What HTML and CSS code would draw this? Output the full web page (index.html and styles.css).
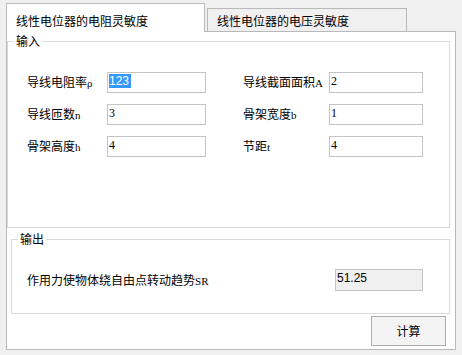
FILE: index.html
```html
<!DOCTYPE html>
<html lang="zh-CN">
<head>
<meta charset="utf-8">
<title>线性电位器</title>
<link rel="stylesheet" href="styles.css">
</head>
<body>
<div class="window">
  <div class="tabs">
    <div class="tab tab-active">线性电位器的电阻灵敏度</div>
    <div class="tab tab-inactive">线性电位器的电压灵敏度</div>
  </div>
  <div class="panel">
    <div class="group group-input">
      <span class="legend">输入</span>
      <div class="form-grid">
        <div class="label">导线电阻率<span class="lat">ρ</span></div>
        <div class="textbox sans"><span class="sel">123</span></div>
        <div class="label label-right">导线截面面积<span class="lat">A</span></div>
        <div class="textbox serif">2</div>

        <div class="label">导线匝数<span class="lat">n</span></div>
        <div class="textbox serif">3</div>
        <div class="label label-right">骨架宽度<span class="lat">b</span></div>
        <div class="textbox serif">1</div>

        <div class="label">骨架高度<span class="lat">h</span></div>
        <div class="textbox serif">4</div>
        <div class="label label-right">节距<span class="lat">t</span></div>
        <div class="textbox serif">4</div>
      </div>
    </div>
    <div class="group group-output">
      <span class="legend">输出</span>
      <div class="out-row">
        <div class="out-label">作用力使物体绕自由点转动趋势<span class="lat">SR</span></div>
        <div class="textbox textbox-out sans">51.25</div>
      </div>
    </div>
    <div class="button">计算</div>
  </div>
</div>
</body>
</html>
```

FILE: styles.css
```css
html, body {
  margin: 0;
}
body {
  background: #f0f0f0;
  font-family: "Noto Sans CJK SC", sans-serif;
  font-size: 12px;
  color: #000;
  width: 462px;
  height: 355px;
  overflow: hidden;
}
.window {
  padding: 3px 0 0 6px;
}
.tabs {
  display: flex;
  align-items: flex-end;
  height: 28px;
}
.tab {
  box-sizing: border-box;
  border: 1px solid #b9b9b9;
  border-bottom: none;
  line-height: 14px;
  padding-left: 9px;
  white-space: nowrap;
}
.tab-active {
  width: 199px;
  height: 29px;
  padding-top: 10px;
  margin-bottom: -1px;
  background: #fff;
  position: relative;
  z-index: 1;
}
.tab-inactive {
  width: 200px;
  height: 23px;
  margin-left: 2px;
  padding-top: 5px;
  background: #f0f0f0;
}
.panel {
  box-sizing: border-box;
  width: 450px;
  height: 319px;
  border: 1px solid #b9b9b9;
  background: #fff;
  display: flex;
  flex-direction: column;
}
.group {
  position: relative;
  box-sizing: border-box;
  border: 1px solid #dadada;
}
.legend {
  position: absolute;
  top: -8px;
  left: 6px;
  padding: 0 2px;
  line-height: 14px;
  background: #fff;
}
.group-input {
  margin-top: 9px;
  width: 443px;
  height: 187px;
  padding: 30px 0 0 19px;
}
.form-grid {
  display: grid;
  grid-template-columns: 80px 99px 123px 94px;
  grid-auto-rows: 21px;
  row-gap: 11px;
  align-items: center;
}
.label {
  line-height: 14px;
  white-space: nowrap;
}
.label-right {
  padding-left: 37px;
}
.lat {
  font-family: "Liberation Serif", serif;
  font-size: 11px;
}
.textbox {
  box-sizing: border-box;
  height: 21px;
  border: 1px solid #c4c4c4;
  background: #fff;
  padding: 1px 0 0 1px;
  line-height: 14px;
}
.sans {
  font-family: "Liberation Sans", sans-serif;
}
.serif {
  font-family: "Liberation Serif", serif;
}
.sel {
  background: #3399ff;
  color: #fff;
  display: inline-block;
  padding-right: 2px;
}
.group-output {
  margin: 11px 0 0 4px;
  width: 439px;
  height: 75px;
  padding: 29px 0 0 15px;
}
.out-row {
  display: flex;
  align-items: center;
}
.out-label {
  width: 308px;
  line-height: 14px;
  white-space: nowrap;
}
.textbox-out {
  width: 88px;
  height: 22px;
  background: #f0f0f0;
  padding-left: 1px;
}
.button {
  align-self: flex-end;
  box-sizing: border-box;
  width: 75px;
  height: 30px;
  margin: 2px 9px 0 0;
  border: 1px solid #adadad;
  background: #f4f4f4;
  display: flex;
  align-items: center;
  justify-content: center;
  line-height: 14px;
}
```
